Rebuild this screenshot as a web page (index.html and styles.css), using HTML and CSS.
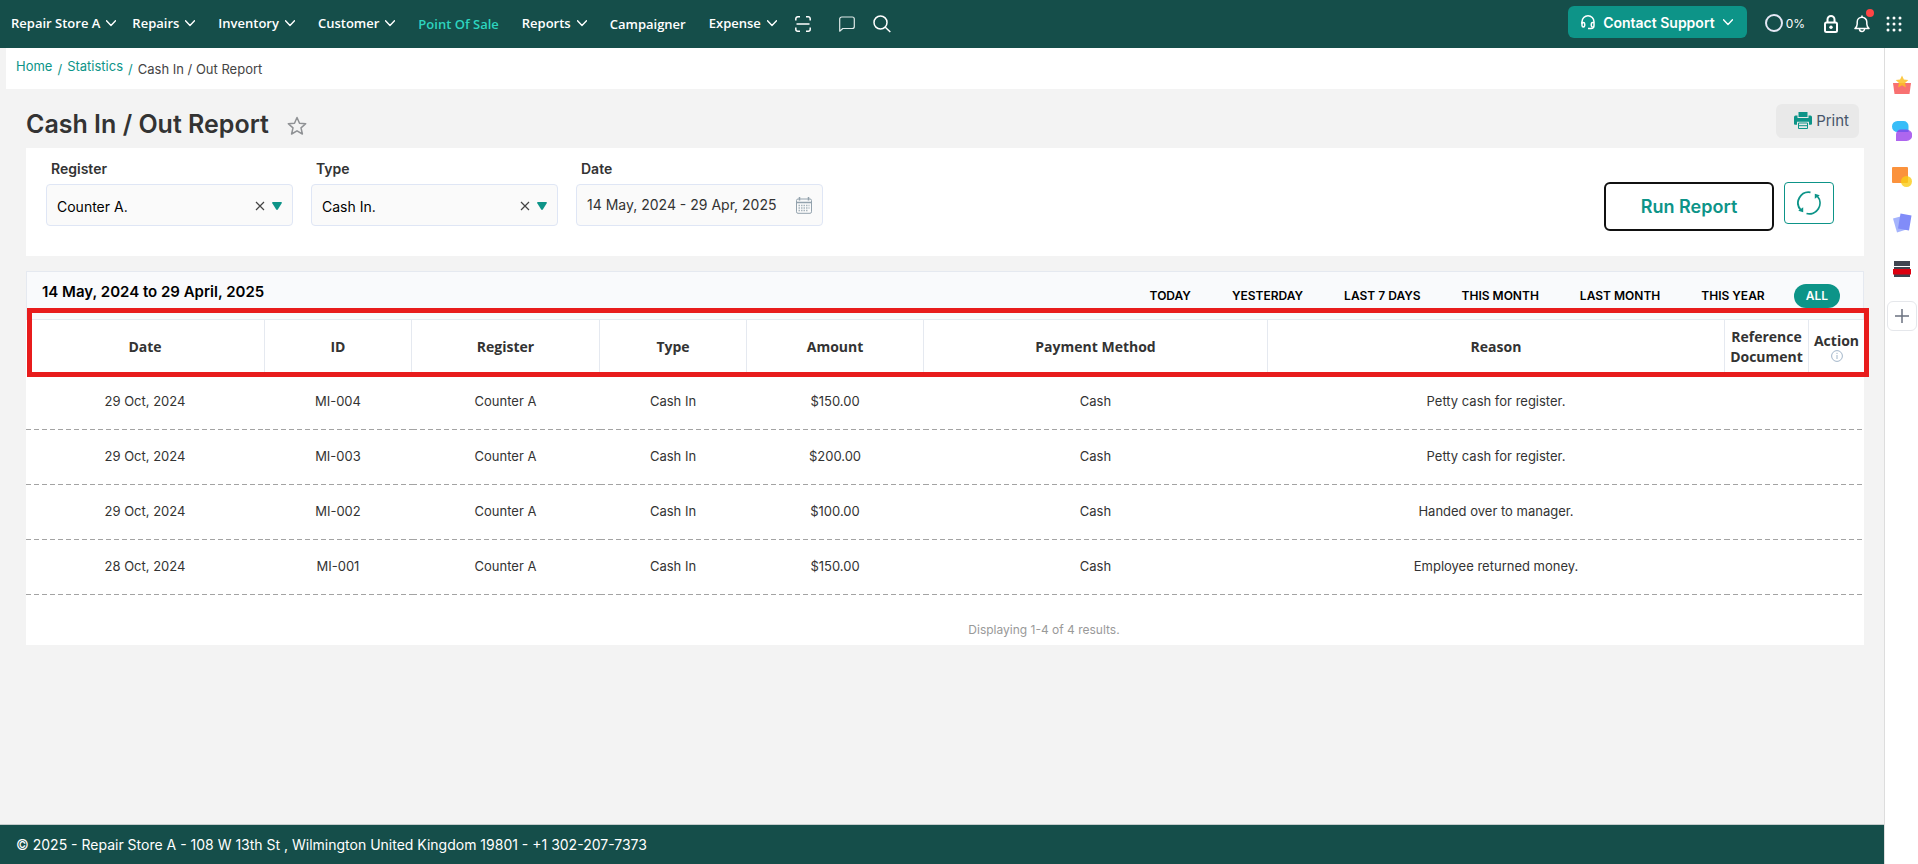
FILE: index.html
```html
<!DOCTYPE html>
<html lang="en">

<head>
     <meta charset="UTF-8">
     <title>Cash In / Out Report</title>
     <meta name="viewport" content="width=device-width, initial-scale=1.0">
     <link rel="stylesheet" href="styles.css">
</head>

<body>

     <!-- shared icon shapes -->
     <svg class="sprite" aria-hidden="true">
          <symbol id="chevron" viewBox="0 0 10 7">
               <path d="M.5 .8 5 5.6 9.5 .8" fill="none" stroke="currentColor" stroke-width="1.4" stroke-linecap="round" stroke-linejoin="round" />
          </symbol>
          <symbol id="cross" viewBox="0 0 10 10">
               <path d="M1 1l8 8M9 1L1 9" fill="none" stroke="#444" stroke-width="1.2" />
          </symbol>
          <symbol id="caret" viewBox="0 0 10 8">
               <path d="M1 0h8q1.4 0 .7 1.2L6 7.2Q5 8.6 4 7.2L.3 1.2Q-.4 0 1 0z" fill="#0d9488" />
          </symbol>
     </svg>

     <header class="topbar">
          <nav class="nav">
               <a class="nav-item store" href="#">Repair Store A <svg class="chevron"><use href="#chevron" /></svg></a>
               <a class="nav-item" href="#">Repairs <svg class="chevron"><use href="#chevron" /></svg></a>
               <a class="nav-item" href="#">Inventory <svg class="chevron"><use href="#chevron" /></svg></a>
               <a class="nav-item" href="#">Customer <svg class="chevron"><use href="#chevron" /></svg></a>
               <a class="nav-item plain pos" href="#">Point Of Sale</a>
               <a class="nav-item" href="#">Reports <svg class="chevron"><use href="#chevron" /></svg></a>
               <a class="nav-item plain" href="#">Campaigner</a>
               <a class="nav-item" href="#">Expense <svg class="chevron"><use href="#chevron" /></svg></a>
          </nav>
          <div class="tools">
               <button class="icon-btn scan" aria-label="Scan">
                    <svg width="16" height="16" viewBox="0 0 16 16" fill="none" stroke="#fff" stroke-width="1.5">
                         <path d="M.8 4.5V2.8a2 2 0 0 1 2-2H5M11 .8h2.200a2 2 0 0 1 2 2v1.700M15.200 11.500v1.700a2 2 0 0 1-2 2H11M5 15.200H2.800a2 2 0 0 1-2-2v-1.700M1.500 8h13" />
                    </svg>
               </button>
               <button class="icon-btn" aria-label="Messages">
                    <svg width="16" height="16" viewBox="0 0 16 16" fill="none" stroke="#dfe9e8" stroke-width="1.2">
                         <path d="M.7 15.200V3a2 2 0 0 1 2-2h10.600a2 2 0 0 1 2 2v7.500a2 2 0 0 1-2 2H3.800z" stroke-linejoin="round" />
                    </svg>
               </button>
               <button class="icon-btn" aria-label="Search">
                    <svg width="18" height="18" viewBox="0 0 18 18" fill="none" stroke="#fff" stroke-width="1.5">
                         <circle cx="7.500" cy="7.500" r="6.500" />
                         <path d="M12.300 12.300l5 4.700" />
                    </svg>
               </button>
          </div>

          <div class="account">
               <button class="support">
                    <svg width="14" height="15" viewBox="0 0 14 15" fill="none" stroke="#fff" stroke-width="1.500">
                         <path d="M1 9V6.800a6 6 0 0 1 12 0v3.700a3 3 0 0 1-3 3H7" />
                         <path d="M1 7.500h1.200a1.500 1.500 0 0 1 1.500 1.500v1.500a1.500 1.500 0 0 1-1.500 1.500H2.500A1.500 1.500 0 0 1 1 10.500zM13 7.500h-1.200a1.500 1.500 0 0 0-1.500 1.500v1.500a1.500 1.500 0 0 0 1.500 1.500" />
                    </svg>
                    Contact Support
                    <svg class="chevron"><use href="#chevron" /></svg>
               </button>
               <span class="progress"><i class="ring"></i>0%</span>
               <button class="icon-btn" aria-label="Lock">
                    <svg width="14" height="18" viewBox="0 0 14 18" fill="none" stroke="#fff" stroke-width="2">
                         <rect x="1" y="7.500" width="12" height="9.500" rx="1.500" />
                         <path d="M3.500 7.500V4.500a3.500 3.500 0 0 1 7 0v3" />
                         <circle cx="7" cy="12.200" r="1.700" fill="#fff" stroke="none" />
                    </svg>
               </button>
               <button class="icon-btn bell" aria-label="Notifications">
                    <svg width="16" height="18" viewBox="0 0 16 18" fill="none" stroke="#fff" stroke-width="1.500">
                         <path d="M1 13.500h14c-1.500-1.400-2.200-2.600-2.200-4.500V7a4.800 4.800 0 0 0-9.600 0v2c0 1.900-.7 3.100-2.200 4.500z" stroke-linejoin="round" />
                         <path d="M8 2V.5M5.500 14a2.500 2.500 0 0 0 5 0" />
                    </svg>
                    <span class="dot"></span>
               </button>
               <button class="icon-btn" aria-label="Apps">
                    <svg width="16" height="16" viewBox="0 0 16 16" fill="#fff">
                         <circle cx="2" cy="2" r="1.500" /><circle cx="8" cy="2" r="1.500" /><circle cx="14" cy="2" r="1.500" />
                         <circle cx="2" cy="8" r="1.500" /><circle cx="8" cy="8" r="1.500" /><circle cx="14" cy="8" r="1.500" />
                         <circle cx="2" cy="14" r="1.500" /><circle cx="8" cy="14" r="1.500" /><circle cx="14" cy="14" r="1.500" />
                    </svg>
               </button>
          </div>
     </header>

     <div class="shell">
          <div class="page">
               <nav class="breadcrumb">
                    <a href="#">Home</a>
                    <span class="slash">/</span>
                    <a href="#">Statistics</a>
                    <span class="slash">/</span>
                    <span class="current">Cash In / Out Report</span>
               </nav>

               <main class="main">
                    <div class="title-row">
                         <h1>Cash In / Out Report</h1>
                         <button class="icon-btn star" aria-label="Favourite">
                              <svg width="20" height="20" viewBox="0 0 20 20" fill="none" stroke="#8f9194" stroke-width="1.500" stroke-linejoin="round">
                                   <path d="M10 1.500l2.500 5.700 6.200.6-4.700 4.100 1.400 6.100L10 14.800 4.600 18 6 11.900 1.300 7.800l6.200-.6z" />
                              </svg>
                         </button>
                         <button class="print">
                              <svg width="18" height="17" viewBox="0 0 18 17">
                                   <path d="M4.500 0h9v5h-9z" fill="#0d9488" />
                                   <path d="M0 5.200q0-1.700 1.500-1.700h2v2.500h11V3.500h2q1.500 0 1.500 1.700v6.600q0 1-1 1h-2V9.800H3v3H1q-1 0-1-1z" fill="#0d9488" />
                                   <path d="M4.500 11h9v5.500h-9zM4.500 13.700h9" fill="#e9e9e9" stroke="#0d9488" />
                              </svg>
                              Print
                         </button>
                    </div>

                    <form class="filters" onsubmit="return false">
                         <div class="field">
                              <label for="register">Register</label>
                              <div class="control">
                                   <select id="register">
                                        <option>Counter A.</option>
                                   </select>
                                   <button type="button" class="icon-btn" aria-label="Clear register"><svg width="10" height="10"><use href="#cross" /></svg></button>
                                   <svg class="caret" width="10" height="8"><use href="#caret" /></svg>
                              </div>
                         </div>
                         <div class="field">
                              <label for="type">Type</label>
                              <div class="control">
                                   <select id="type">
                                        <option>Cash In.</option>
                                   </select>
                                   <button type="button" class="icon-btn" aria-label="Clear type"><svg width="10" height="10"><use href="#cross" /></svg></button>
                                   <svg class="caret" width="10" height="8"><use href="#caret" /></svg>
                              </div>
                         </div>
                         <div class="field">
                              <label for="date">Date</label>
                              <div class="control date">
                                   <input type="text" id="date" value="14 May, 2024 - 29 Apr, 2025">
                                   <svg width="16" height="17" viewBox="0 0 16 17" fill="none" stroke="#93a2ad">
                                        <rect x=".5" y="2" width="15" height="14.300" rx="1.500" />
                                        <path d="M.5 5.500h15" stroke-width="1.500" />
                                        <path d="M3.500 0v3.500M12.500 0v3.500" stroke-width="1.500" />
                                        <path d="M2.500 8.500h11M2.500 11h11M2.500 13.500h9" stroke-width="1.500" stroke-dasharray="1.500 1" opacity=".8" />
                                   </svg>
                              </div>
                         </div>
                         <div class="actions">
                              <button class="run">Run Report</button>
                              <button type="reset" class="reset" aria-label="Reset">
                                   <svg width="24" height="24" viewBox="0 0 24 24" fill="none" stroke="#0d9488" stroke-width="1.800">
                                        <path d="M13.500 1.300A10.700 10.700 0 0 0 3.800 19M9.500 22.500A10.700 10.700 0 0 0 20.200 5" />
                                        <path d="M6.200 16.200v5l-5-1.500zM17.800 7.800v-5l5 1.500z" fill="#0d9488" stroke="none" />
                                   </svg>
                              </button>
                         </div>
                    </form>

                    <section class="report">
                         <div class="report-head">
                              <h2>14 May, 2024 to 29 April, 2025</h2>
                              <div class="periods">
                                   <a href="#">TODAY</a>
                                   <a href="#">YESTERDAY</a>
                                   <a href="#">LAST 7 DAYS</a>
                                   <a href="#">THIS MONTH</a>
                                   <a href="#">LAST MONTH</a>
                                   <a href="#">THIS YEAR</a>
                                   <a href="#" class="active">ALL</a>
                              </div>
                         </div>
                         <div class="table-wrap">
                              <table>
                                   <colgroup>
                                        <col class="c-date">
                                        <col class="c-id">
                                        <col class="c-register">
                                        <col class="c-type">
                                        <col class="c-amount">
                                        <col class="c-method">
                                        <col>
                                        <col class="c-ref">
                                        <col class="c-action">
                                   </colgroup>
                                   <thead>
                                        <tr>
                                             <th>Date</th>
                                             <th>ID</th>
                                             <th>Register</th>
                                             <th>Type</th>
                                             <th>Amount</th>
                                             <th>Payment Method</th>
                                             <th>Reason</th>
                                             <th>Reference Document</th>
                                             <th class="action">Action
                                                  <svg width="12" height="12" viewBox="0 0 12 12" fill="none" stroke="#a3b6c9">
                                                       <circle cx="6" cy="6" r="5.400" />
                                                       <path d="M6 5v4M6 2.800v1.200" />
                                                  </svg>
                                             </th>
                                        </tr>
                                   </thead>
                                   <tbody>
                                        <tr>
                                             <td>29 Oct, 2024</td>
                                             <td>MI-004</td>
                                             <td>Counter A</td>
                                             <td>Cash In</td>
                                             <td>$150.00</td>
                                             <td>Cash</td>
                                             <td>Petty cash for register.</td>
                                             <td></td>
                                             <td></td>
                                        </tr>
                                        <tr>
                                             <td>29 Oct, 2024</td>
                                             <td>MI-003</td>
                                             <td>Counter A</td>
                                             <td>Cash In</td>
                                             <td>$200.00</td>
                                             <td>Cash</td>
                                             <td>Petty cash for register.</td>
                                             <td></td>
                                             <td></td>
                                        </tr>
                                        <tr>
                                             <td>29 Oct, 2024</td>
                                             <td>MI-002</td>
                                             <td>Counter A</td>
                                             <td>Cash In</td>
                                             <td>$100.00</td>
                                             <td>Cash</td>
                                             <td>Handed over to manager.</td>
                                             <td></td>
                                             <td></td>
                                        </tr>
                                        <tr>
                                             <td>28 Oct, 2024</td>
                                             <td>MI-001</td>
                                             <td>Counter A</td>
                                             <td>Cash In</td>
                                             <td>$150.00</td>
                                             <td>Cash</td>
                                             <td>Employee returned money.</td>
                                             <td></td>
                                             <td></td>
                                        </tr>
                                   </tbody>
                              </table>
                              <div class="highlight"></div>
                         </div>
                         <p class="summary">Displaying 1-4 of 4 results.</p>
                    </section>
               </main>

               <footer>© 2025 - Repair Store A - 108 W 13th St , Wilmington United Kingdom 19801 - +1 302-207-7373</footer>
          </div>

          <aside class="dock">
               <svg width="20" height="20" viewBox="0 0 20 20">
                    <path d="M1 8h18l-1.500 11h-15z" fill="#f87171" />
                    <path d="M10 .5l1.900 4 4.400.5-3.300 3 .9 4.500-3.900-2.200-3.900 2.200.9-4.500-3.300-3 4.400-.5z" fill="#fbbf24" opacity=".85" />
               </svg>
               <svg width="20" height="20" viewBox="0 0 20 20">
                    <path d="M5.500 0h6a5 5 0 0 1 5 5v6h-11a5.500 5.500 0 0 1 0-11z" fill="#38bdf8" />
                    <path d="M9 8.500h5.500a5.500 5.500 0 0 1 0 11.500H4v-6.500a5 5 0 0 1 5-5z" fill="#9333ea" opacity=".75" />
               </svg>
               <svg width="20" height="20" viewBox="0 0 20 20">
                    <rect width="16" height="16" rx="1" fill="#fb923c" />
                    <circle cx="14.500" cy="14.500" r="5.500" fill="#facc15" opacity=".8" />
               </svg>
               <svg width="20" height="20" viewBox="0 0 20 20">
                    <path d="M1 5.500l11-3 4 13.500-11 3.500z" fill="#a5b4fc" />
                    <path d="M8.500.5l11 2-2.500 15-11-2z" fill="#818cf8" />
               </svg>
               <svg width="20" height="20" viewBox="0 0 20 20">
                    <path d="M2 2h16v5H2zM2 15h16v3H2z" fill="#3f4450" />
                    <path d="M2 8h16v2H2z" fill="#3f4450" />
                    <path d="M1 10h18v5.500H1z" fill="#dc0010" />
               </svg>
               <button class="add" aria-label="Add">
                    <svg width="14" height="14" viewBox="0 0 14 14" stroke="#6b7280" stroke-width="1.500"><path d="M7 0v14M0 7h14" /></svg>
               </button>
          </aside>
     </div>

</body>

</html>
```

FILE: styles.css
```css
:root {
     --dark: #154e4a;
     --teal: #0d9488;
     --bg: #f3f3f3;
     --line: #e5e9f0;
     --text: #333;
}

* {
     box-sizing: border-box;
     margin: 0;
     padding: 0;
}

body {
     display: flex;
     flex-direction: column;
     min-height: 100vh;
     font-family: Inter, sans-serif;
     font-size: 14px;
     background: var(--bg);
     color: var(--text);
}

a {
     text-decoration: none;
     color: inherit;
}

button,
select,
input {
     font: inherit;
     border: none;
     background: none;
     cursor: pointer;
}

svg {
     display: block;
     flex: none;
}

.sprite {
     display: none;
}

.icon-btn {
     display: flex;
}

.chevron {
     width: 10px;
     height: 7px;
}

/* top bar */
.topbar {
     display: flex;
     align-items: center;
     height: 48px;
     padding: 0 16px 0 11px;
     background: var(--dark);
     color: white;
}

.nav {
     display: flex;
     gap: 23px;
     padding-bottom: 2px;
     font-family: "Open Sans", sans-serif;
     font-size: 13px;
     font-weight: 600;
     line-height: 18px;
}

.nav-item {
     display: flex;
     align-items: center;
     gap: 6px;
     white-space: nowrap;
}

.nav-item.store {
     margin-right: -7px;
}

.nav-item.plain {
     padding-top: 2px;
}

.nav-item.pos {
     color: #2dd4bf;
}

.tools {
     display: flex;
     align-items: center;
     gap: 18px;
     padding-left: 18px;
}

.scan {
     margin-right: 10px;
}

.account {
     display: flex;
     align-items: center;
     gap: 16px;
     margin-left: auto;
}

.support {
     display: flex;
     align-items: center;
     gap: 8px;
     height: 32px;
     padding: 0 14px 0 13px;
     margin-bottom: 4px;
     border-radius: 6px;
     background: var(--teal);
     color: white;
     font-size: 14px;
     font-weight: 600;
     white-space: nowrap;
}

.progress {
     display: flex;
     align-items: center;
     gap: 3px;
     margin: 0 3px 2px 2px;
     font-size: 12px;
}

.ring {
     width: 18px;
     height: 18px;
     border: 2px solid #e5e7f5;
     border-radius: 50%;
}

.bell {
     position: relative;
}

.dot {
     position: absolute;
     top: -6px;
     right: -4px;
     width: 8px;
     height: 8px;
     border-radius: 50%;
     background: #ff4545;
}

/* page and right dock */
.shell {
     display: flex;
     flex: 1;
}

.page {
     display: flex;
     flex: 1;
     flex-direction: column;
     min-width: 0;
}

.dock {
     display: flex;
     flex-direction: column;
     align-items: center;
     gap: 26px;
     width: 34px;
     padding-top: 27px;
     border-left: 1px solid #ddd;
     background: white;
}

.add {
     display: flex;
     align-items: center;
     justify-content: center;
     width: 30px;
     height: 30px;
     margin-top: -4px;
     border: 1px solid #e5e7eb;
     border-radius: 6px;
}

.breadcrumb {
     display: flex;
     align-items: flex-start;
     gap: 5px;
     height: 41px;
     margin-left: 6px;
     padding: 9px 10px;
     background: white;
     font-size: 13px;
     line-height: 18px;
     color: var(--teal);
}

.slash,
.current {
     padding-top: 3px;
}

.current {
     color: #444;
}

.main {
     flex: 1;
     padding: 15px 20px 20px 26px;
}

.title-row {
     display: flex;
     align-items: flex-start;
     height: 44px;
     padding-right: 5px;
}

h1 {
     padding-top: 3px;
     font-size: 25px;
     font-weight: 600;
     line-height: 34px;
}

.star {
     margin: 12px 0 0 18px;
}

.print {
     display: flex;
     align-items: center;
     gap: 4px;
     height: 34px;
     margin-left: auto;
     padding: 0 10px 2px 18px;
     border-radius: 6px;
     background: #e9e9e9;
     color: #475569;
     font-size: 15px;
}

.filters {
     display: flex;
     gap: 18px;
     height: 108px;
     padding: 12px 30px 0 20px;
     background: white;
}

.field {
     width: 247px;
}

.field label {
     display: block;
     padding-left: 5px;
     font-weight: 600;
     line-height: 18px;
}

.control {
     display: flex;
     align-items: center;
     gap: 7px;
     height: 42px;
     margin-top: 6px;
     padding: 2px 10px 0;
     border: 1px solid #dfe6f5;
     border-radius: 4px;
     background: #fafafa;
}

.control.date {
     padding: 0 10px;
}

.control select {
     flex: 1;
     min-width: 0;
     appearance: none;
     color: black;
}

.control input {
     flex: 1;
     min-width: 0;
     padding-bottom: 2px;
     color: var(--text);
}

.actions {
     display: flex;
     align-items: flex-start;
     gap: 10px;
     margin-left: auto;
     padding-top: 22px;
}

.run {
     width: 170px;
     height: 49px;
     border: 2px solid #111;
     border-radius: 6px;
     background: white;
     color: var(--teal);
     font-size: 18px;
     font-weight: 600;
}

.reset {
     display: flex;
     align-items: center;
     justify-content: center;
     width: 50px;
     height: 42px;
     border: 1px solid var(--teal);
     border-radius: 4px;
}

/* report table */
.report {
     margin-top: 15px;
     background: white;
}

.report-head {
     display: flex;
     align-items: flex-start;
     justify-content: space-between;
     height: 49px;
     padding: 10px 23px 0 15px;
     border: 1px solid var(--line);
     background: #f9fafc;
     color: black;
}

h2 {
     font-size: 15px;
     font-weight: 600;
     line-height: 20px;
}

.periods {
     display: flex;
     gap: 17px;
     padding-top: 2px;
     font-size: 12px;
     font-weight: 600;
     line-height: 24px;
}

.periods a {
     padding: 0 12px;
     border-radius: 12px;
}

.periods .active {
     background: var(--teal);
     color: white;
}

.table-wrap {
     position: relative;
}

table {
     width: 100%;
     table-layout: fixed;
     border-collapse: separate;
     border-spacing: 0;
}

.c-date { width: 13%; }
.c-id { width: 8%; }
.c-register { width: 188px; }
.c-type { width: 8%; }
.c-amount { width: 177px; }
.c-method { width: 344px; }
.c-ref { width: 84px; }
.c-action { width: 55px; }

th {
     height: 55px;
     padding-bottom: 2px;
     border-right: 1px solid var(--line);
     font-family: "Open Sans", sans-serif;
     font-size: 14px;
     font-weight: 700;
     line-height: 20px;
}

th:last-child {
     border-right: none;
}

th.action {
     line-height: 18px;
}

th.action svg {
     margin: 0 auto;
}

/* row rule: 5px dashes, 3px gaps */
td {
     height: 55px;
     padding: 0 1px 4px 0;
     background: repeating-linear-gradient(to right, #a3a3a3 0 5px, transparent 5px 8px) left bottom / 100% 1px no-repeat;
     font-size: 13px;
     text-align: center;
}

/* frame drawn round the header row */
.highlight {
     position: absolute;
     top: -12px;
     left: 1px;
     right: -5px;
     height: 69px;
     border: 5px solid #e81c1c;
}

.summary {
     padding: 26px 0 6px 198px;
     font-size: 12px;
     line-height: 18px;
     text-align: center;
     color: #999;
}

footer {
     height: 40px;
     padding: 0 16px;
     border-top: 1px solid #c5cccc;
     background: var(--dark);
     color: white;
     font-size: 14px;
     line-height: 40px;
}
```
